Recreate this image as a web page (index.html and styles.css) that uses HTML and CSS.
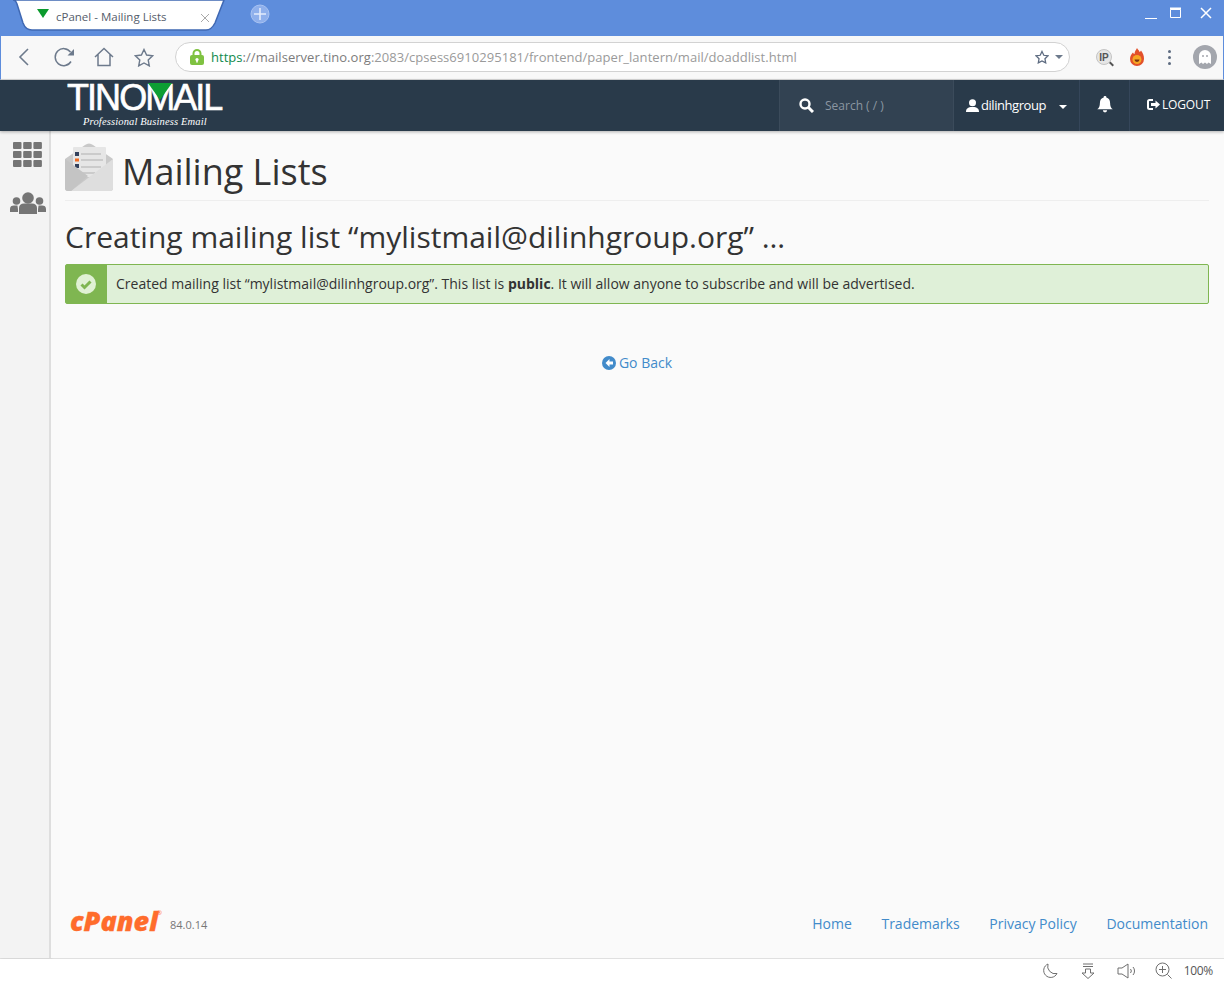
FILE: index.html
```html
<!DOCTYPE html>
<html lang="en">
<head>
<meta charset="utf-8">
<title>cPanel - Mailing Lists</title>
<link rel="stylesheet" href="styles.css">
</head>
<body>
<div class="window">
  <div class="titlebar">
    <div class="tab">
      <svg class="tab-shape" width="216" height="32" viewBox="0 0 216 32"><path d="M1 0C3 0 4 1 5 4l6 19c1.500 4 4 7 9 7h174c5 0 7-3 9-7l9-23z" fill="#fff" stroke="#3f68b3" stroke-width="1.500"/><path d="M0-2h216V0H0z" fill="#5e8ddc"/></svg>
      <svg class="tab-fav" width="12" height="9" viewBox="0 0 12 9"><path d="M0 0h12L6 9z" fill="#0b9a2d"/></svg>
      <span class="tab-title">cPanel - Mailing Lists</span>
      <svg class="tab-close" width="10" height="10" viewBox="0 0 10 10"><path d="M1 1l8 8M9 1l-8 8" stroke="#a9a9a9" stroke-width="1" fill="none"/></svg>
    </div>
    <svg class="new-tab" width="20" height="20" viewBox="0 0 20 20"><circle cx="10" cy="10" r="9" fill="#8fb0ec" stroke="#a9c3f2"/><path d="M10 4v12M4 10h12" stroke="#e4ecfb" stroke-width="1.6"/></svg>
    <div class="win-controls">
      <svg class="win-min" width="12" height="12" viewBox="0 0 12 12"><path d="M0 11.500h12" stroke="#fff" stroke-width="1"/></svg>
      <svg width="12" height="12" viewBox="0 0 12 12"><path d="M.5 2.500h10v8H.5z" fill="none" stroke="#fff"/><path d="M0 1.500h11" stroke="#fff" stroke-width="2"/></svg>
      <svg width="12" height="12" viewBox="0 0 12 12"><path d="M1 1l10 10M11 1L1 11" stroke="#fff" stroke-width="1.500"/></svg>
    </div>
  </div>
  <div class="toolbar">
    <svg class="tool t-back" width="12" height="20" viewBox="0 0 12 20"><path d="M10 2L2 10l8 8" fill="none" stroke="#6d7a8c" stroke-width="1.600"/></svg>
    <svg class="tool t-reload" width="22" height="20" viewBox="0 0 22 20"><path d="M17 14.500A8.500 8.500 0 1 1 16.500 5" fill="none" stroke="#6d7a8c" stroke-width="1.500"/><path d="M20 2v6.500h-6.500z" fill="#6d7a8c"/></svg>
    <svg class="tool t-home" width="20" height="20" viewBox="0 0 20 20"><path d="M1 10l9-8.500L19 10M4 7.500V18.500h12V7.500" fill="none" stroke="#6d7a8c" stroke-width="1.500"/></svg>
    <svg class="tool t-star" width="20" height="19" viewBox="0 0 20 19"><path d="M10 1.500l2.600 5.500 6 .8-4.400 4.100 1.100 6L10 15l-5.300 2.900 1.100-6L1.400 7.800l6-.8z" fill="none" stroke="#6d7a8c" stroke-width="1.400"/></svg>
    <div class="omnibox">
      <svg class="lock" width="14" height="16" viewBox="0 0 14 16"><path d="M3.500 7V4.500a3.500 3.500 0 0 1 7 0V7" fill="none" stroke="#7fc241" stroke-width="2"/><rect y="6" width="14" height="10" rx="2" fill="#7fc241"/><circle cx="7" cy="10.500" r="1.600" fill="#fff"/><path d="M6.200 11h1.600v2.500H6.200z" fill="#fff"/></svg>
      <span class="url"><span class="url-https">https</span>://mailserver.tino.org<span class="url-dim">:2083/cpsess6910295181/frontend/paper_lantern/mail/doaddlist.html</span></span>
      <svg class="om-star" width="14" height="14" viewBox="0 0 20 19"><path d="M10 1.500l2.600 5.500 6 .8-4.400 4.100 1.100 6L10 15l-5.300 2.900 1.100-6L1.400 7.800l6-.8z" fill="none" stroke="#5d6b80" stroke-width="1.800"/></svg>
      <span class="om-caret"></span>
    </div>
    <div class="ext-ip"><span>IP</span></div>
    <svg class="ext-fire" width="14" height="18" viewBox="0 0 14 18"><path d="M7 0c1 2 2 2 2.500 4C10.500 3.500 11 3 11 2.500c2 3 3 5 3 8.500a7 7 0 0 1-14 0C0 8 1.500 6 3 4.500 3.500 5.500 4 6 4.500 6 4.500 3.500 6 2 7 0z" fill="#e2502a"/><circle cx="7" cy="11.500" r="4.500" fill="#f6a623"/><path d="M4.500 11.500a2.500 2.500 0 0 0 5 0z" fill="#7a3410"/></svg>
    <div class="kebab"><i></i><i></i><i></i></div>
    <div class="avatar">
      <svg width="14" height="16" viewBox="0 0 14 16"><path d="M1 15V7a6 6 0 0 1 12 0v8l-2.500-1.500L9 15l-2-1.500L5 15l-1.500-1.500z" fill="#fff"/><circle cx="5" cy="7" r="1" fill="#a3a6ad"/><circle cx="9" cy="7" r="1" fill="#a3a6ad"/></svg>
    </div>
  </div>
  <header class="navbar">
    <div class="logo">
      <div class="logo-word"><span>TINO</span><span class="logo-m">M</span><span>AIL</span></div>
      <div class="logo-tag">Professional Business Email</div>
    </div>
    <div class="nav-search">
      <svg width="15" height="15" viewBox="0 0 15 15"><circle cx="6" cy="6" r="4.500" fill="none" stroke="#fff" stroke-width="2.400"/><path d="M9.500 9.500L14 14" stroke="#fff" stroke-width="3"/></svg>
      <span>Search ( / )</span>
    </div>
    <div class="nav-user">
      <svg width="13" height="13" viewBox="0 0 13 13"><circle cx="6.500" cy="3.800" r="3.500" fill="#fff"/><path d="M0 13c0-3.500 2-4.500 4.500-5h4c2.500.5 4.500 1.500 4.500 5z" fill="#fff"/></svg>
      <span class="user-name">dilinhgroup</span>
      <span class="user-caret"></span>
    </div>
    <div class="nav-bell">
      <svg width="16" height="17" viewBox="0 0 15 16"><path d="M7.500 0a1.200 1.200 0 0 1 1.200 1.500C11 2 12.300 4 12.300 6.500c0 3 .7 4.500 2.500 6H.2c1.800-1.500 2.500-3 2.500-6C2.700 4 4 2 6.300 1.500A1.200 1.200 0 0 1 7.500 0z" fill="#fff"/><path d="M5.500 13.500a2 2 0 0 0 4 0z" fill="#fff"/></svg>
    </div>
    <div class="nav-logout">
      <svg width="13" height="11" viewBox="0 0 13 11"><path d="M6 1H2.500A1.500 1.500 0 0 0 1 2.500v6A1.500 1.500 0 0 0 2.500 10H6" fill="none" stroke="#fff" stroke-width="2"/><path d="M4 4h4.500V1.500L13 5.500l-4.500 4V7H4z" fill="#fff"/></svg>
      <span>LOGOUT</span>
    </div>
  </header>
  <div class="body-row">
    <aside class="sidebar">
      <svg class="side-grid" width="29" height="25" viewBox="0 0 29 25" fill="#757575">
        <rect width="8.500" height="7" rx="1"/><rect x="10.200" width="8.500" height="7" rx="1"/><rect x="20.400" width="8.500" height="7" rx="1"/>
        <rect y="9" width="8.500" height="7" rx="1"/><rect x="10.200" y="9" width="8.500" height="7" rx="1"/><rect x="20.400" y="9" width="8.500" height="7" rx="1"/>
        <rect y="18" width="8.500" height="7" rx="1"/><rect x="10.200" y="18" width="8.500" height="7" rx="1"/><rect x="20.400" y="18" width="8.500" height="7" rx="1"/>
      </svg>
      <svg class="side-users" width="36" height="22" viewBox="0 0 36 22" fill="#757575">
        <circle cx="18" cy="6" r="5.800"/><path d="M9 22v-6c0-3 2-4.500 5-4.500h8c3 0 5 1.500 5 4.500v6z"/>
        <circle cx="6.500" cy="9" r="3.800"/><path d="M0 20v-3c0-2.500 1.500-3.500 4-3.500h3.500C7.500 15 8 16 8 18v2z"/>
        <circle cx="29.500" cy="9" r="3.800"/><path d="M36 20v-3c0-2.500-1.500-3.500-4-3.500h-3.500c0 1.500-.5 2.500-.5 4.500v2z"/>
      </svg>
    </aside>
    <main class="content">
      <div class="page-head">
        <svg class="head-icon" width="48" height="48" viewBox="0 0 48 48">
          <path d="M0 16L20 2q4-3 8 0l20 14v29a3 3 0 0 1-3 3H3a3 3 0 0 1-3-3z" fill="#c9c9c9"/>
          <rect x="8" y="4" width="33" height="30" rx="1" fill="#e6e6e6"/>
          <rect x="10" y="9" width="4" height="4" fill="#33415c"/><rect x="10" y="15.500" width="4" height="3" fill="#f26b21"/><rect x="10" y="21" width="4" height="4" fill="#33415c"/>
          <path d="M16 11h20M16 17h22M16 24h20M16 30h14" stroke="#c2c2c2" stroke-width="1.500"/>
          <path d="M48 16v29a3 3 0 0 1-3 3H6l42-32z" fill="#dedede"/>
          <path d="M0 16l23 17L6 48H3a3 3 0 0 1-3-3z" fill="#c4c4c4"/>
        </svg>
        <h1 class="page-title">Mailing Lists</h1>
      </div>
      <h2 class="sub-title">Creating mailing list “mylistmail@dilinhgroup.org” …</h2>
      <div class="alert">
        <div class="alert-icon">
          <svg width="20" height="20" viewBox="0 0 20 20"><circle cx="10" cy="10" r="10" fill="#e0f1d4"/><path d="M5.500 10.500l3 3 6-6" fill="none" stroke="#7fb651" stroke-width="3"/></svg>
        </div>
        <div class="alert-text">Created mailing list “mylistmail@dilinhgroup.org”. This list is <strong>public</strong>. It will allow anyone to subscribe and will be advertised.</div>
      </div>
      <div class="back-row">
        <a class="link back-link" href="#">
          <svg width="14" height="14" viewBox="0 0 14 14"><circle cx="7" cy="7" r="7" fill="#428bca"/><path d="M7.500 3L3.500 7l4 4V8.500h3.500v-3H7.500z" fill="#fff"/></svg>
          Go Back
        </a>
      </div>
      <footer class="footer">
        <div class="cp-brand"><span class="cp-logo">cPanel</span><sup class="cp-reg">®</sup><span class="cp-ver">84.0.14</span></div>
        <nav class="foot-links">
          <a class="link" href="#">Home</a>
          <a class="link" href="#">Trademarks</a>
          <a class="link" href="#">Privacy Policy</a>
          <a class="link" href="#">Documentation</a>
        </nav>
      </footer>
    </main>
  </div>
  <div class="statusbar">
    <svg class="st-moon" width="16" height="16" viewBox="0 0 16 16"><path d="M6 1a7 7 0 1 0 9 9.500A7.500 7.500 0 0 1 6 1z" fill="none" stroke="#6f6f6f"/></svg>
    <svg class="st-down" width="14" height="16" viewBox="0 0 14 16"><path d="M2 1h10M2 3.500h10M4.500 6h5v4H13l-6 5.500L1 10h3.500z" fill="none" stroke="#6f6f6f"/></svg>
    <svg class="st-sound" width="20" height="16" viewBox="0 0 20 16"><path d="M1 5h4l6-4v14l-6-4H1z" fill="none" stroke="#6f6f6f"/><path d="M13.500 6a3 3 0 0 1 0 4M16 4a6 6 0 0 1 0 8" fill="none" stroke="#6f6f6f"/></svg>
    <svg class="st-zoom" width="17" height="17" viewBox="0 0 17 17"><circle cx="7.500" cy="7.500" r="6.500" fill="none" stroke="#6f6f6f"/><path d="M7.500 4v7M4 7.500h7M12.500 12.500l4 4" stroke="#6f6f6f"/></svg>
    <span class="zoom-pct">100%</span>
  </div>
</div>
</body>
</html>
```

FILE: styles.css
```css
* { box-sizing: border-box; }
html, body { margin: 0; padding: 0; }
body { font-family: "Open Sans", sans-serif; color: #333; background: #fff; overflow: hidden; }
.window { width: 1224px; height: 982px; display: flex; flex-direction: column; }

.titlebar { height: 36px; background: #5e8ddc; display: flex; align-items: flex-start; position: relative; }
.tab { width: 208px; height: 30px; margin-left: 16px; display: flex; align-items: center; padding-left: 21px; position: relative; }
.tab-shape { position: absolute; left: -4px; top: 0; }
.tab-fav { position: relative; margin-top: -3px; }
.tab-title { position: relative; font-size: 11.500px; color: #555d6b; margin-left: 7px; margin-top: 3px; width: 144px; white-space: nowrap; }
.tab-close { position: relative; margin-top: 5px; }
.new-tab { margin: 4px 0 0 26px; }
.win-controls { margin-left: auto; display: flex; gap: 18px; padding: 7px 12px 0 0; }
.win-min { margin-right: -5px; }

.toolbar { height: 44px; background: #f8f8f8; border-left: 1px solid #5e8ddc; border-right: 1px solid #5e8ddc; border-bottom: 1px solid #d8d8d8; display: flex; align-items: center; padding-bottom: 1px; }
.tool { flex: none; }
.t-back { margin-left: 17px; }
.t-reload { margin-left: 24px; }
.t-home { margin-left: 18px; }
.t-star { margin-left: 20px; }
.omnibox { width: 895px; height: 30px; margin-left: 21px; background: #fff; border: 1px solid #d2d2d2; border-radius: 15px; display: flex; align-items: center; padding: 0 6px 0 14px; }
.lock { flex: none; }
.url { font-size: 13px; letter-spacing: .04px; margin-left: 7px; color: #7c7c7c; white-space: nowrap; flex: 1; }
.url-https { color: #0f8a4d; }
.url-dim { color: #9a9a9a; }
.om-caret { width: 0; height: 0; border-left: 4px solid transparent; border-right: 4px solid transparent; border-top: 4px solid #6d7a8c; margin-left: 6px; }
.ext-ip { width: 16px; height: 16px; border-radius: 50%; background: #e6e6e6; border: 1px solid #c4c4c4; margin-left: 26px; display: flex; align-items: center; justify-content: center; font-family: "Liberation Sans", sans-serif; font-size: 10px; font-weight: 700; color: #555; position: relative; }
.ext-ip::after { content: ""; position: absolute; right: -3px; bottom: -1px; width: 5px; height: 2px; background: #555; transform: rotate(45deg); }
.ext-fire { margin-left: 18px; }
.kebab { margin-left: 24px; display: flex; flex-direction: column; gap: 3px; }
.kebab i { display: block; width: 3px; height: 3px; border-radius: 50%; background: #5d6b80; }
.avatar { width: 24px; height: 24px; border-radius: 50%; background: #a3a6ad; margin-left: 22px; display: flex; align-items: center; justify-content: center; }

.navbar { height: 51px; background: #293a4a; display: flex; align-items: stretch; color: #fff; box-shadow: 0 1px 3px rgba(0,0,0,.3); position: relative; z-index: 2; }
.logo { width: 779px; padding-left: 67px; flex: none; }
.logo-word { font-family: "Liberation Sans", sans-serif; font-size: 36px; line-height: 36px; letter-spacing: -1.950px; color: #fff; white-space: nowrap; margin-top: 0; -webkit-text-stroke: .6px #fff; }
.logo-m { position: relative; }
.logo-m::after { content: ""; position: absolute; left: 3px; top: 6px; border-left: 12px solid transparent; border-right: 12px solid transparent; border-top: 17px solid #0d9e33; }
.logo-tag { font-family: "Liberation Serif", serif; font-style: italic; font-size: 10.500px; letter-spacing: .15px; line-height: 12px; color: #fff; margin: 0 0 0 16px; white-space: nowrap; }
.nav-search { width: 175px; flex: none; background: #324252; border-left: 1px solid #3b4b5b; border-right: 1px solid #3b4b5b; display: flex; align-items: center; padding-left: 19px; gap: 11px; font-size: 12px; color: #8b96a1; }
.nav-user { width: 126px; flex: none; border-right: 1px solid #35465a; display: flex; align-items: center; padding: 0 0 1px 12px; gap: 2px; font-size: 13px; color: #fff; }
.user-name { letter-spacing: -.45px; }
.user-caret { width: 0; height: 0; border-left: 4px solid transparent; border-right: 4px solid transparent; border-top: 4px solid #fff; margin-left: 11px; margin-top: 4px; }
.nav-bell { width: 50px; flex: none; border-right: 1px solid #35465a; display: flex; align-items: center; justify-content: center; padding: 0 0 2px 1px; }
.nav-logout { flex: 1; display: flex; align-items: center; padding: 0 0 2px 17px; gap: 2px; font-size: 12px; letter-spacing: -.15px; color: #fff; }

.body-row { height: 828px; display: flex; border-bottom: 1px solid #e0e0e0; }
.sidebar { width: 51px; flex: none; background: #f3f3f3; border-right: 2px solid #dedede; box-shadow: 1px 0 3px rgba(0,0,0,.1); display: flex; flex-direction: column; align-items: center; padding: 11px 0 0 6px; gap: 25px; }
.content { flex: 1; background: #fafafa; padding: 0 15px 0 14px; display: flex; flex-direction: column; min-width: 0; }
.page-head { height: 70px; border-bottom: 1px solid #eee; display: flex; align-items: flex-start; padding-top: 12px; gap: 9px; }
.head-icon { flex: none; }
.page-title { font-size: 36px; line-height: 56px; font-weight: 400; margin: 1px 0 0; color: #333; white-space: nowrap; }
.sub-title { font-size: 30px; line-height: 40px; font-weight: 400; margin: 16px 0 7px; color: #333; white-space: nowrap; }
.alert { height: 40px; display: flex; border: 1px solid #7fb651; border-radius: 2px; background: #dff0d8; }
.alert-icon { width: 41px; flex: none; background: #7fb651; display: flex; align-items: center; justify-content: center; padding-right: 1px; }
.alert-text { padding-left: 9px; font-size: 14px; line-height: 38px; color: #333; white-space: nowrap; }
.alert-text strong { font-weight: 700; }
.back-row { text-align: center; margin-top: 49px; font-size: 14px; line-height: 20px; }
.link { color: #428bca; text-decoration: none; }
.back-link { display: inline-flex; align-items: center; gap: 3px; }
.footer { margin-top: auto; height: 66px; display: flex; justify-content: space-between; padding: 16px 1px 0 5px; }
.cp-brand { display: flex; align-items: flex-start; }
.cp-logo { font-family: "Open Sans", sans-serif; font-weight: 800; font-style: italic; font-size: 27px; line-height: 26px; color: #ff6c2c; -webkit-text-stroke: .3px #ff6c2c; }
.cp-reg { font-size: 6px; line-height: 8px; color: #ff6c2c; margin: 1px 0 0 -1px; }
.cp-ver { font-size: 11px; line-height: 14px; color: #777; margin: 10px 0 0 8px; }
.foot-links { display: flex; gap: 29.700px; font-size: 14px; line-height: 20px; padding-top: 6px; }

.statusbar { flex: 1; background: #fff; display: flex; align-items: center; justify-content: flex-end; padding: 0 11px 0 0; }
.st-down { margin-left: 23px; }
.st-sound { margin-left: 22px; }
.st-zoom { margin-left: 18px; }
.zoom-pct { font-size: 12px; letter-spacing: -.3px; color: #555; margin-left: 12px; }
```
